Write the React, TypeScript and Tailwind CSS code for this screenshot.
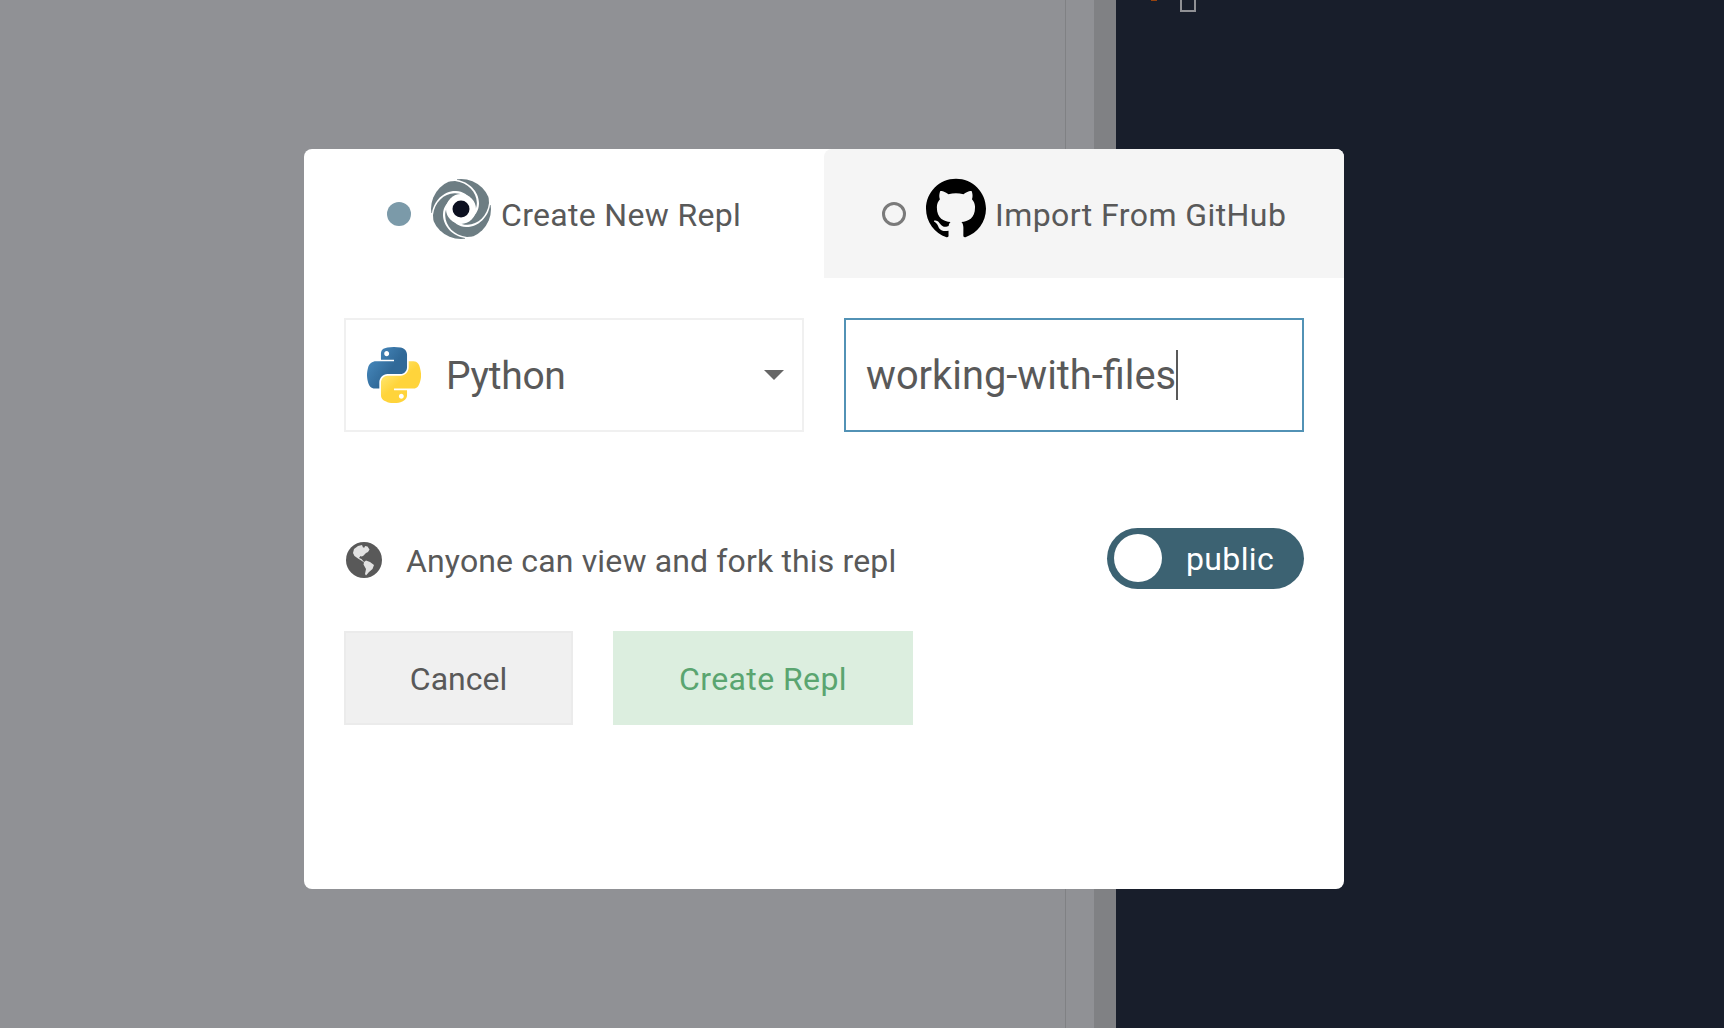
import React from "react";
import { SiGithub } from "react-icons/si";

function Swirl() {
  return (
    <svg width="60" height="60" viewBox="0 0 60 60" className="block shrink-0">
      <circle cx="30" cy="30" r="30" fill="#6d7d83" />
      <circle cx="30" cy="30" r="15" fill="#fff" />
      {[0, 90, 180, 270].map((a) => (
        <g key={a} transform={`rotate(${a} 30 30)`}>
          <path
            d="M17 1.5 L26 -.5 L26 1 C38 2.5 48.5 13 48 25 C47.7 32 44 37 38 41 L37 38.5 C43 34 46 30 45.8 23.5 C45.5 13 37 3.5 24 2 L18 2.4 Z"
            fill="#fff"
          />
        </g>
      ))}
      <circle cx="30" cy="30" r="8.5" fill="#0c1020" />
    </svg>
  );
}

function PythonLogo() {
  return (
    <svg width="54" height="56" viewBox="0 0 111 112" preserveAspectRatio="none" className="-mt-px block shrink-0">
      <defs>
        <linearGradient id="pyBlue" x1="0" y1="0.1" x2="0.6" y2="0.55">
          <stop offset="0" stopColor="#4b8fc4" />
          <stop offset="1" stopColor="#306998" />
        </linearGradient>
        <linearGradient id="pyYellow" x1="0.1" y1="0.2" x2="0.4" y2="0.55">
          <stop offset="0" stopColor="#ffe873" />
          <stop offset="1" stopColor="#ffd43b" />
        </linearGradient>
      </defs>
      <path fill="url(#pyBlue)" d="M54.919 0c-4.584.022-8.961.413-12.813 1.095C30.76 3.099 28.7 7.295 28.7 15.032v10.219h26.813v3.406H18.638c-7.793 0-14.616 4.684-16.75 13.594-2.462 10.213-2.571 16.586 0 27.25 1.905 7.938 6.457 13.594 14.25 13.594h9.218v-12.25c0-8.85 7.657-16.657 16.75-16.657h26.782c7.454 0 13.406-6.138 13.406-13.625v-25.53c0-7.267-6.13-12.726-13.406-13.938C64.282.328 59.502-.02 54.919 0zm-14.5 8.22c2.77 0 5.031 2.298 5.031 5.125 0 2.816-2.262 5.093-5.031 5.093-2.78 0-5.031-2.277-5.031-5.093 0-2.827 2.251-5.125 5.03-5.125z" />
      <path fill="url(#pyYellow)" d="M85.638 28.657v11.906c0 9.231-7.826 17-16.75 17H42.106c-7.336 0-13.406 6.279-13.406 13.625V96.72c0 7.266 6.319 11.54 13.406 13.625 8.488 2.495 16.627 2.946 26.782 0 6.75-1.955 13.406-5.888 13.406-13.625V86.5H55.513v-3.405H95.7c7.793 0 10.696-5.436 13.406-13.594 2.8-8.399 2.68-16.476 0-27.25-1.925-7.758-5.604-13.594-13.406-13.594H85.638zM70.575 93.313c2.78 0 5.031 2.278 5.031 5.094 0 2.827-2.251 5.125-5.031 5.125-2.77 0-5.031-2.298-5.031-5.125 0-2.816 2.261-5.094 5.031-5.094z" />
    </svg>
  );
}

function Globe() {
  return (
    <svg width="36" height="36" viewBox="0 0 36 36" className="mt-0.5 block shrink-0">
      <circle cx="18" cy="18" r="18" fill="#595959" />
      <path
        fill="#e2e2e2"
        d="M8 7 L12 4 L16 3 L17 5.5 L18.5 5.5 L19 4 L21.5 4.5 L23.5 7.5 L22 10 L20 11 L17 14 L15.5 14.5 L14.5 14 L13 16 L15.5 17 L18 20 L20 18.5 L24 20 L28 23 L26.5 27 L23 30 L20 33.5 L19 32 L20 27 L17.5 22.5 L18 20.5 L16 19 L12 16.5 L8.5 14 L7 11 Z"
      />
    </svg>
  );
}

export default function App() {
  return (
    <div className="relative h-[1028px] w-[1724px] overflow-hidden bg-[#181e2b] font-[Roboto,sans-serif] text-[32px] leading-10 text-[#595959]">
      <div className="flex h-full">
        <div className="w-[1065px] bg-[#909195]" />
        <div className="w-px bg-[#808184]" />
        <div className="w-7 bg-[#909195]" />
        <div className="w-[22px] bg-[#808184]" />
        <div className="flex grow items-start">
          <div className="ml-[35px] h-px w-1.5 bg-[#96430f]" />
          <div className="ml-[23px] h-3 w-4 border-2 border-t-0 border-[#909195]" />
        </div>
      </div>

      <div className="absolute top-[149px] left-[304px] flex h-[740px] w-[1040px] flex-col overflow-hidden rounded-lg bg-white">
        <div className="flex h-[129px]">
          <div className="flex w-[520px] items-start pt-[30px] pl-[83px]">
            <div className="mt-[23px] size-6 rounded-full bg-[#7b9aa9]" />
            <div className="ml-5">
              <Swirl />
            </div>
            <span className="mt-4 ml-[10px] whitespace-nowrap tracking-[0.32px]">Create New Repl</span>
          </div>
          <div className="flex w-[520px] items-start rounded-tl-lg bg-[#f5f5f5] pt-[30px] pl-[58px]">
            <div className="mt-[23px] size-6 rounded-full border-3 border-[#7a7a7a]" />
            <SiGithub size={60} className="-mt-px ml-5 shrink-0 text-black" />
            <span className="mt-4 ml-[9px] whitespace-nowrap tracking-[0.43px]">Import From GitHub</span>
          </div>
        </div>

        <div className="mt-10 flex gap-10 px-10">
          <div className="flex h-[114px] w-[460px] items-center border-2 border-[#f0f0f0] pr-[18px] pl-[21px]">
            <PythonLogo />
            <span className="mt-0.5 ml-[25px] text-[39px] tracking-[-0.3px]">Python</span>
            <div className="ml-auto h-0 w-0 border-x-10 border-t-10 border-x-transparent border-t-[#666]" />
          </div>
          <div className="flex h-[114px] w-[460px] items-center border-2 border-[#5292b5] pl-5">
            <span className="mt-0.5 text-[39.8px]">working-with-files</span>
            <div className="h-[50px] w-0.5 bg-[#595959]" />
          </div>
        </div>

        <div className="mt-24 flex h-[61px] items-center pr-10 pl-[42px]">
          <Globe />
          <span className="mt-1 ml-6 tracking-[0.15px]">Anyone can view and fork this repl</span>
          <div className="ml-auto flex h-[61px] w-[197px] items-center rounded-full bg-[#3c6272] pl-[7px] text-white">
            <div className="-mt-px size-12 rounded-full bg-white" />
            <span className="ml-6 tracking-[0.35px]">public</span>
          </div>
        </div>

        <div className="mt-[42px] flex gap-10 px-10">
          <button className="h-[94px] w-[229px] border-2 border-[#ebebeb] bg-[#f0f0f0] pt-px">Cancel</button>
          <button className="h-[94px] w-[300px] bg-[#dceedf] pt-px tracking-[0.4px] text-[#5aa570]">Create Repl</button>
        </div>
      </div>
    </div>
  );
}
